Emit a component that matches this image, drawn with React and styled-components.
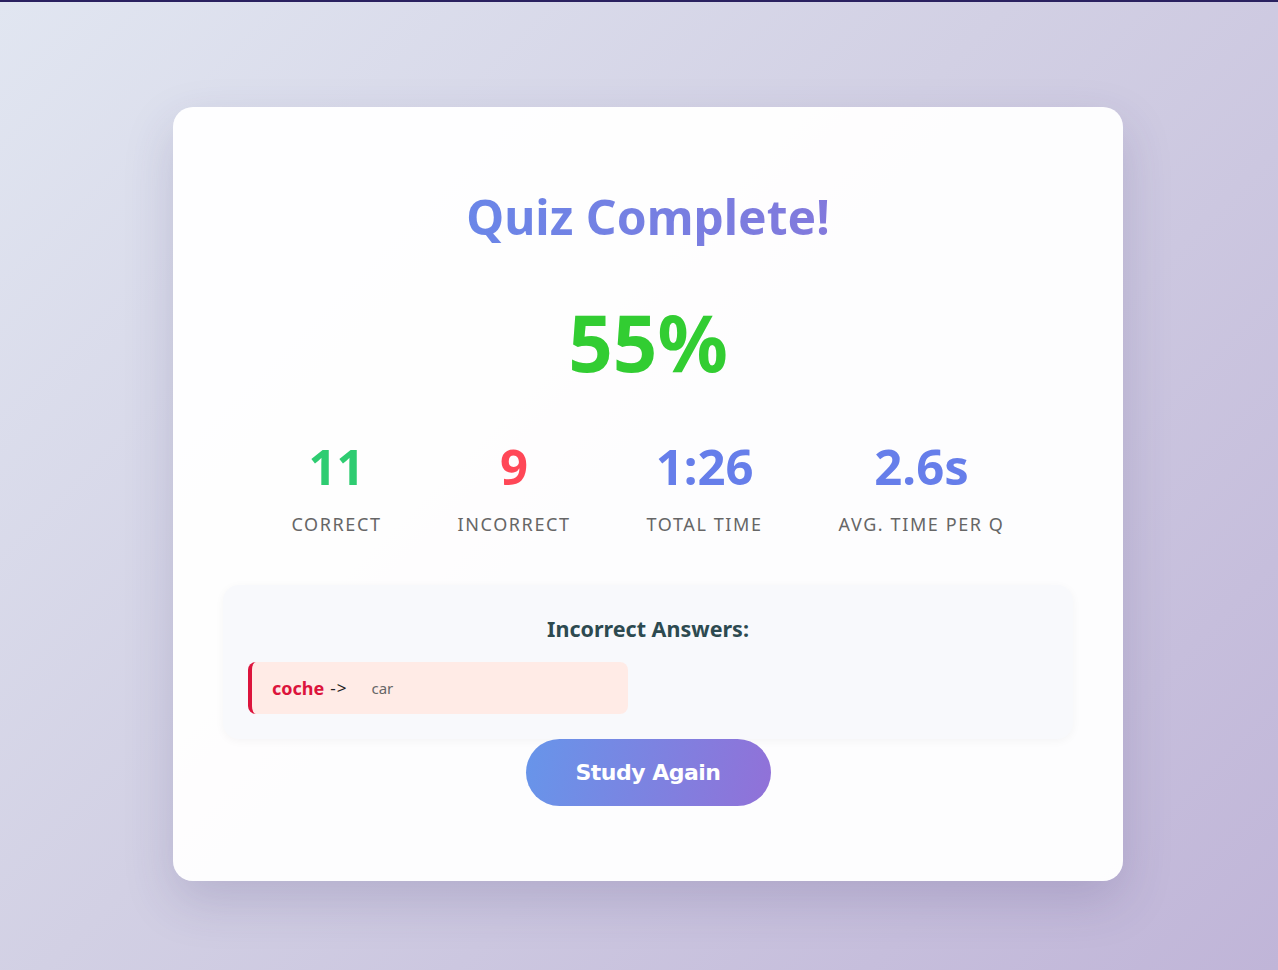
import React from 'react'
import styled, { createGlobalStyle } from 'styled-components'

const GlobalStyle = createGlobalStyle`
  html, body { margin: 0; padding: 0; }
  body {
    font-family: "Noto Sans", "Open Sans", sans-serif;
    min-height: 100vh;
    background: linear-gradient(135deg, #e1e6f1 0%, #d2d0e4 45%, #c0b5d8 100%);
  }
`

const stats = [
  { value: '11', label: 'Correct', color: '#2ecc71' },
  { value: '9', label: 'Incorrect', color: '#ff4757' },
  { value: '1:26', label: 'Total Time', color: '#667eea' },
  { value: '2.6s', label: 'Avg. Time per Q', color: '#667eea' },
]

const wrong = [{ word: 'coche', answer: 'car' }]

function App() {
  return (
    <>
      <GlobalStyle />
      <Page>
        <Card>
          <Title>Quiz Complete!</Title>
          <Score>55%</Score>
          <Stats>
            {stats.map(s => (
              <Stat key={s.label}>
                <StatValue color={s.color}>{s.value}</StatValue>
                <StatLabel>{s.label}</StatLabel>
              </Stat>
            ))}
          </Stats>
          <Review>
            <ReviewTitle>Incorrect Answers:</ReviewTitle>
            {wrong.map(w => (
              <WrongItem key={w.word}>
                <Word>{w.word}</Word>
                <Arrow>-&gt;</Arrow>
                <Answer>{w.answer}</Answer>
              </WrongItem>
            ))}
          </Review>
          <StudyButton>Study Again</StudyButton>
        </Card>
      </Page>
    </>
  )
}

const Page = styled.div`
  min-height: 100vh;
  box-sizing: border-box;
  border-top: 2px solid #2a2160;
  display: flex;
  justify-content: center;
  align-items: flex-start;
  padding: 105px 0 0 18px;
`

const Card = styled.div`
  width: 950px;
  box-sizing: border-box;
  padding: 81px 50px 75px;
  background: rgba(255, 255, 255, 0.96);
  border-radius: 20px;
  box-shadow: 0 20px 50px rgba(60, 50, 110, 0.18);
  display: flex;
  flex-direction: column;
  align-items: center;
`

const Title = styled.h1`
  margin: 0;
  font-size: 48px;
  line-height: 1.2;
  font-weight: 700;
  background: linear-gradient(90deg, #6a86e8, #8279dc);
  -webkit-background-clip: text;
  background-clip: text;
  color: transparent;
`

const Score = styled.div`
  margin-top: 50px;
  font-size: 78px;
  line-height: 1.2;
  font-weight: 700;
  color: #32cd32;
`

const Stats = styled.div`
  margin-top: 48px;
  display: flex;
  justify-content: center;
  gap: 76px;
`

const Stat = styled.div`
  display: flex;
  flex-direction: column;
  align-items: center;
`

const StatValue = styled.div`
  font-size: 49px;
  line-height: 1.2;
  font-weight: 700;
  color: ${p => p.color};
`

const StatLabel = styled.div`
  margin-top: 16px;
  font-size: 18px;
  letter-spacing: 1.6px;
  text-transform: uppercase;
  color: #666;
`

const Review = styled.div`
  margin-top: 49px;
  align-self: stretch;
  background: #f8f9fc;
  border-radius: 16px;
  padding: 31px 25px 25px;
  box-shadow: 0 2px 10px rgba(0, 0, 0, 0.04);
`

const ReviewTitle = styled.h3`
  margin: 0 0 20px;
  text-align: center;
  font-size: 21.5px;
  line-height: 1.2;
  font-weight: 700;
  color: #2d4a50;
`

const WrongItem = styled.div`
  width: 380px;
  height: 52px;
  box-sizing: border-box;
  display: flex;
  align-items: center;
  padding-left: 20px;
  background: #ffebe6;
  border-left: 4px solid #dc143c;
  border-radius: 8px;
`

const Word = styled.span`
  font-size: 18px;
  font-weight: 700;
  color: #dc143c;
`

const Arrow = styled.span`
  margin-left: 6px;
  font-size: 17px;
  letter-spacing: 1px;
  color: #222;
`

const Answer = styled.span`
  margin-left: 24px;
  font-size: 15px;
  color: #666;
`

const StudyButton = styled.button`
  width: 245px;
  height: 67px;
  border: none;
  border-radius: 34px;
  background: linear-gradient(100deg, #6795ea, #9171d8);
  color: #fff;
  font-family: "DejaVu Sans", sans-serif;
  font-size: 22px;
  font-weight: 700;
  letter-spacing: -0.5px;
  cursor: pointer;
`

export default App
